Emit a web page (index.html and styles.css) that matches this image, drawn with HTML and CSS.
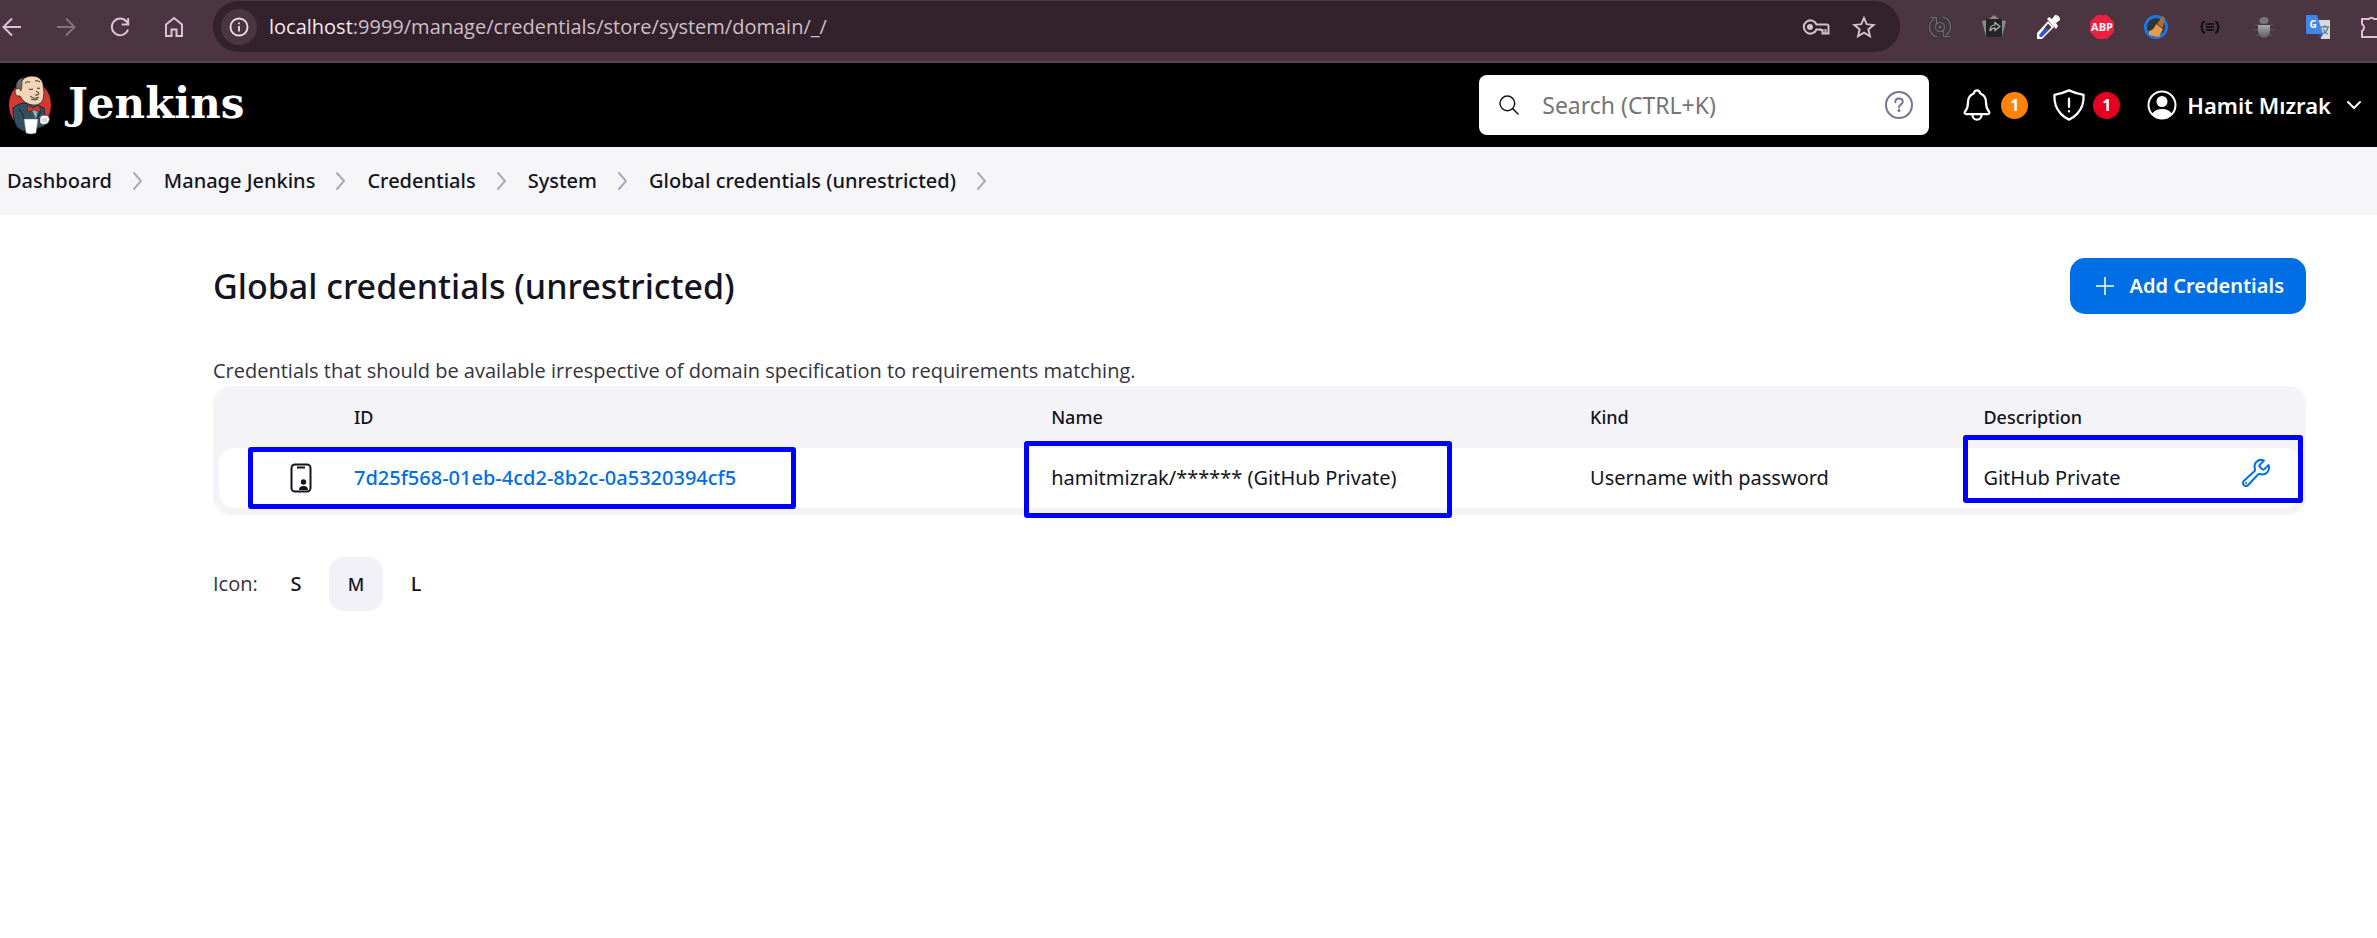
FILE: index.html
```
<!DOCTYPE html>
<html lang="en">
<head>
<meta charset="utf-8">
<title>Global credentials (unrestricted) [Jenkins]</title>
<link rel="stylesheet" href="styles.css">
</head>
<body>
<div class="toolbar">
  <div class="nav-buttons">
    <button class="tool" aria-label="Back"><svg viewBox="0 0 24 24"><path class="line" d="M21 12H4M12 3.500L3.500 12l8.500 8.500"/></svg></button>
    <button class="tool tool-off" aria-label="Forward"><svg viewBox="0 0 24 24"><path class="line" d="M3 12h17M12 3.500l8.500 8.500-8.500 8.500"/></svg></button>
    <button class="tool" aria-label="Reload"><svg viewBox="0 0 24 24"><path class="line" d="M20 14.500A8.300 8.300 0 1 1 18.500 6.500L20 8.500M20.200 3v6.500h-6.500"/></svg></button>
    <button class="tool" aria-label="Home"><svg viewBox="0 0 24 24"><path class="line" d="M4 9.500L12 3l8 6.500V21h-5.500v-6.500h-5V21H4z"/></svg></button>
  </div>
  <div class="omnibox">
    <button class="site-info" aria-label="Site information"><svg viewBox="0 0 24 24"><circle class="line" cx="12" cy="12" r="9.300"/><path class="line" d="M12 11v6M12 7v2"/></svg></button>
    <div class="url"><span class="host">localhost</span>:9999/manage/credentials/store/system/domain/_/</div>
    <button class="tool tool-box tool-key" aria-label="Passwords"><svg viewBox="0 0 28 24"><path class="line" d="M14.500 9.500H25a1.500 1.500 0 0 1 1.500 1.500v7.500h-6V15h-2v-0.500h-4A6.600 6.600 0 1 1 14.500 9.500z"/><circle cx="8" cy="12" r="3" fill="currentColor"/><path class="line" d="M23.500 14v4"/></svg></button>
    <button class="tool tool-box" aria-label="Bookmark"><svg viewBox="0 0 24 24"><path fill="currentColor" d="M24 9.200l-8.600-.8L12 .5 8.600 8.400 0 9.200l6.500 5.600L4.600 23.200 12 18.800l7.400 4.400-1.900-8.400zM12 16.500l-4.500 2.700 1.200-5.100-4-3.500 5.200-.5L12 5.300l2.100 4.800 5.200.5-4 3.500 1.200 5.100z"/></svg></button>
  </div>
  <div class="extensions">
    <button class="tool" aria-label="Sync extension"><svg viewBox="0 0 24 24"><g fill="none" stroke="#2c2c2c" stroke-width="3"><path d="M9 22A10 10 0 0 1 6 4M15 2a10 10 0 0 1 3 18"/><path d="M2 2.500h6.500V9M22 21.500h-6.500V15"/><circle cx="12" cy="12" r="4.500"/></g><g fill="none" stroke="#6c6c6c" stroke-width="1.500"><path d="M9 22A10 10 0 0 1 6 4M15 2a10 10 0 0 1 3 18"/><path d="M2 2.500h6.500V9M22 21.500h-6.500V15"/><circle cx="12" cy="12" r="4.500"/></g><circle cx="12" cy="12" r="1.500" fill="#666"/></svg></button>
    <button class="tool" aria-label="Share extension"><svg viewBox="0 0 24 24"><path fill="#8b8b8b" d="M0 6l5-1v17H4zM24 6l-5-1v17h1zM7 4l5-4 5 4v3H7z"/><rect x="4" y="4" width="16" height="18" rx="1" fill="#242424"/><path d="M8 16c0-6 3-6 5-6V7.500l5 4-5 4v-2.500c-2 0-3.500 0-5 3z" fill="none" stroke="#bbb" stroke-width="1.200"/></svg></button>
    <button class="tool" aria-label="Colour picker extension"><svg viewBox="0 0 24 24"><path fill="#fff" d="M12 6L1 18v6h5L18 12zM11 4l2-2 3 2 3-4q5 0 5 5l-4 3 2 3-2 3z"/><path fill="#2f55cf" d="M8 14h6l-8 8H4l-1-2z"/><path fill="#4a3541" d="M12 8.500l3.500 3.500L14 14H8z"/></svg></button>
    <button class="tool" aria-label="Adblock extension"><svg viewBox="0 0 24 24"><path fill="#ef1f43" d="M7 0h10l7 7v10l-7 7H7l-7-7V7z"/><text class="abp" x="12" y="16" text-anchor="middle">ABP</text></svg></button>
    <button class="tool" aria-label="Cleaner extension"><svg viewBox="0 0 24 24"><circle cx="12" cy="12" r="10.500" fill="#303437" stroke="#1c78e0" stroke-width="3"/><path fill="#b66a32" d="M17 3l2-2 1.500 1.500L19 13l-6-4z"/><path fill="#e8994a" d="M12 9l7 5-4 8-10-2v-4q5-1 7-7z"/></svg></button>
    <button class="tool" aria-label="Braces extension"><svg viewBox="0 0 24 24"><path fill="none" stroke="#0b090a" stroke-width="1.600" d="M7 6.500c-5 0-1 5.500-4.500 5.500C6 12 2 17.500 7 17.500M17 6.500c5 0 1 5.500 4.500 5.500C18 12 22 17.500 17 17.500M8 9h8M8 12h8M8 15h8"/></svg></button>
    <button class="tool" aria-label="Bug extension"><svg viewBox="0 0 24 24"><defs><linearGradient id="bug" x2="0" y2="1"><stop stop-color="#aaa"/><stop offset="1" stop-color="#5c5c5c"/></linearGradient></defs><path stroke="#625a5e" stroke-width="1" d="M3 9l5 2M21 9l-5 2M2 15h20M4 21l5-3M20 21l-5-3"/><ellipse cx="12" cy="5.500" rx="4.500" ry="3.500" fill="#777"/><path fill="url(#bug)" d="M6 10h12v6q-1 7-6 7t-6-7z"/></svg></button>
    <button class="tool" aria-label="Translate extension"><svg viewBox="0 0 24 24"><path fill="#d4dbdc" d="M10 5h14v19H15z"/><path fill="#4285ea" d="M0 0h11l6 19H1q-1 0-1-1z"/><path fill="#3046b5" d="M12 19h5l-3 5z"/><path fill="none" stroke="#63828b" stroke-width="1.300" d="M15 12h8M19 10v2M22 12q-1 5-6 7M17 14q2 4 5 5"/><text class="gt" x="7" y="13" text-anchor="middle">G</text></svg></button>
    <button class="tool" aria-label="Extensions"><svg viewBox="0 0 24 24"><path class="line" d="M2 4h7a3 3 0 0 1 5 0h6v18H2v-6a4 4 0 0 0 0-7z"/></svg></button>
  </div>
</div>

<header class="header">
  <a class="brand" href="#" aria-label="Jenkins home">
    <svg class="butler" viewBox="0 0 43 60">
      <ellipse cx="22" cy="30" rx="21" ry="24" fill="#d33833"/>
      <path fill="#335061" stroke="#1c2a33" d="M5 33q4-4 10-5l14 2 7 3 1 8-1 10-9 3-12 2-6-4q-4-7-4-19z"/>
      <path fill="#f0d6b7" stroke="#231f20" stroke-width=".8" d="M12 9Q15 1 24 1q9 0 11 8l1 9q0 7-3 10-4 3-9 2-9-2-12-9-5 1-5-5 1-4 5-3z"/>
      <path fill="#6d6b6d" stroke="#231f20" stroke-width=".6" d="M8 14Q7 5 16 2q-3 3-2 8l-1 6-2-3z"/>
      <path fill="none" stroke="#231f20" stroke-width=".9" d="M17 8q2-2 5-1M27 6q3-1 5 1M21 14q2 1 4 0M29 13q2 1 3 0M28 16l3 2q0 3-4 2M22 21q5 4 9 1M23 24q4 2 7 0"/>
      <path fill="#8fb0c4" d="M23 33l7 2-2 9z"/>
      <path fill="#e0312d" stroke="#231f20" stroke-width=".5" d="M19 30l6 3 6-3 2 7-7-2-6 2z"/>
      <path fill="none" stroke="#15222b" d="M11 34q4 4 5 10M33 36l-4 8"/>
      <path fill="#fff" stroke="#777" stroke-width=".5" d="M16 44h14l-2 14q-5 2-10 0z"/>
      <path fill="#fff" stroke="#555" stroke-width=".6" d="M32 43q1-4 8-2 3 3 0 7-4 3-8 0z"/>
      <path fill="none" stroke="#777" stroke-width=".6" d="M34 44h5M34 46h5"/>
    </svg>
    <span class="wordmark">Jenkins</span>
  </a>
  <div class="search">
    <label class="search-label" for="search" aria-label="Search"><svg viewBox="0 0 512 512"><g fill="none" stroke="currentColor" stroke-width="32" stroke-linecap="round"><path d="M221.090 64a157.090 157.090 0 10157.090 157.090A157.100 157.100 0 00221.090 64z"/><path d="M338 338l110 110"/></g></svg></label>
    <input class="search-input" id="search" type="text" placeholder="Search (CTRL+K)">
    <a class="help" href="#" aria-label="Help"><svg viewBox="0 0 28 28"><g fill="none" stroke="currentColor" stroke-width="2"><circle cx="14" cy="14" r="13"/><path d="M10.300 11.200q0-3.700 3.700-3.700t3.700 3.200q0 1.800-2 3-1.700 1-1.700 2.800" stroke-linecap="round"/></g><circle cx="14" cy="19.500" r="1.500" fill="currentColor"/></svg></a>
  </div>
  <button class="alert" aria-label="Notifications"><svg viewBox="0 0 512 512"><g class="ion"><path d="M427.680 351.430C402 320 383.870 304 383.870 217.350 383.870 138 343.350 109.730 310 96c-4.430-1.820-8.600-6-9.950-10.550C294.200 65.540 277.800 48 256 48s-38.210 17.550-44 37.470c-1.350 4.600-5.520 8.710-9.950 10.530-33.390 13.750-73.870 41.920-73.870 121.350C128.130 304 110 320 84.320 351.430 73.680 364.450 83 384 101.610 384h308.880c18.510 0 27.770-19.610 17.190-32.570zM320 384v16a64 64 0 01-128 0v-16"/></g></svg><span class="badge badge-orange">1</span></button>
  <button class="alert" aria-label="Security warnings"><svg viewBox="0 0 512 512"><g class="ion"><path d="M463.100 112.370C373.680 96.330 336.710 84.450 256 48c-80.710 36.450-117.680 48.330-207.100 64.370C32.700 369.130 240.580 457.790 256 464c15.420-6.210 223.300-94.870 207.100-351.630zM256 166v118M256 344v4"/></g></svg><span class="badge badge-red">1</span></button>
  <button class="user">
    <svg class="user-icon" viewBox="0 0 30 30"><circle cx="15" cy="15" r="13.500" fill="none" stroke="currentColor" stroke-width="2"/><circle cx="15" cy="11.500" r="5.500" fill="currentColor"/><path fill="currentColor" d="M5 24q3-5 10-5t10 5q-4 5-10 5T5 24z"/></svg>
    <span>Hamit Mızrak</span>
    <svg class="user-arrow" viewBox="0 0 16 16"><path fill="none" stroke="currentColor" stroke-width="2" stroke-linecap="round" d="M2 5l6 6 6-6"/></svg>
  </button>
</header>

<nav class="crumbs" aria-label="Breadcrumb">
  <a href="#">Dashboard</a><svg viewBox="0 0 10 18"><path d="M1 1l7 8-7 8"/></svg>
  <a href="#">Manage Jenkins</a><svg viewBox="0 0 10 18"><path d="M1 1l7 8-7 8"/></svg>
  <a href="#">Credentials</a><svg viewBox="0 0 10 18"><path d="M1 1l7 8-7 8"/></svg>
  <a href="#">System</a><svg viewBox="0 0 10 18"><path d="M1 1l7 8-7 8"/></svg>
  <a href="#">Global credentials (unrestricted)</a><svg viewBox="0 0 10 18"><path d="M1 1l7 8-7 8"/></svg>
</nav>

<main class="main">
  <div class="title-row">
    <h1>Global credentials (unrestricted)</h1>
    <a class="add" href="#"><svg viewBox="0 0 18 18"><path stroke="currentColor" stroke-width="1.500" d="M9 0v18M0 9h18"/></svg>Add Credentials</a>
  </div>
  <p class="intro">Credentials that should be available irrespective of domain specification to requirements matching.</p>
  <div class="table-card">
    <table class="table">
      <colgroup><col class="col-icon"><col class="col-id"><col class="col-name"><col class="col-kind"><col class="col-desc"><col></colgroup>
      <thead>
        <tr><th></th><th>ID</th><th>Name</th><th>Kind</th><th>Description</th><th></th></tr>
      </thead>
      <tbody>
        <tr>
          <td class="cell-icon"><svg viewBox="0 0 22 30"><rect x="1.500" y="1.500" width="19" height="27" rx="3.500" fill="none" stroke="currentColor" stroke-width="2"/><path stroke="currentColor" stroke-width="2" d="M7 4.500h8"/><circle cx="13.500" cy="19" r="2.700" fill="currentColor"/><path fill="currentColor" d="M9 27q0-4 4.500-4t4.500 4z"/></svg></td>
          <td><a class="id-link" href="#">7d25f568-01eb-4cd2-8b2c-0a5320394cf5</a><span class="mark mark-id"></span></td>
          <td>hamitmizrak/****** (GitHub Private)<span class="mark mark-name"></span></td>
          <td>Username with password</td>
          <td>GitHub Private<span class="mark mark-desc"></span></td>
          <td class="cell-action"><a href="#" aria-label="Update"><svg viewBox="0 0 512 512"><path fill="none" stroke="currentColor" stroke-width="32" stroke-linecap="round" d="M393.870 190a32.100 32.100 0 01-45.250 0l-26.570-26.570a32.090 32.090 0 010-45.260L382.190 58a1 1 0 00-.3-1.640c-38.820-16.640-89.150-8.160-121.110 23.570-30.580 30.350-32.320 76-21.120 115.840a31.930 31.930 0 01-9.060 32.080L64 380a48.170 48.170 0 1068 68l153.860-167a31.930 31.930 0 0131.600-9.130c39.540 10.590 84.540 8.600 114.720-21.190 32.490-32 39.500-88.560 23.750-120.930a1 1 0 00-1.600-.26z"/><circle cx="96" cy="416" r="16" fill="currentColor"/></svg></a></td>
        </tr>
      </tbody>
    </table>
  </div>
  <div class="sizes">
    <span class="sizes-label">Icon:</span>
    <a class="size" href="#">S</a>
    <span class="size size-on">M</span>
    <a class="size" href="#">L</a>
  </div>
</main>
</body>
</html>
```
FILE: styles.css
```
* { box-sizing: border-box; }

body {
  margin: 0;
  background: #fff;
  color: #14141f;
  font: 20px/30px "Noto Sans", "Open Sans", sans-serif;
}

a { color: inherit; text-decoration: none; }
button { border: 0; padding: 0; background: none; color: inherit; font: inherit; }
svg { display: block; flex: none; overflow: visible; }

.toolbar {
  display: flex;
  align-items: flex-start;
  height: 63px;
  padding-top: 1px;
  background: #4a3541;
  border-bottom: 2px solid #57444f;
  overflow: hidden;
}
.nav-buttons, .extensions { display: flex; gap: 30px; height: 51px; align-items: center; }
.nav-buttons { margin-right: 27px; }
.extensions { width: 449px; margin-left: 28px; overflow: hidden; }
.tool { flex: none; width: 24px; height: 24px; color: #dfbfd2; }
.tool-off { color: #85717c; }
.tool-box { color: #d2c2cb; }
.tool-key { width: 28px; }
.line { fill: none; stroke: currentColor; stroke-width: 2; }
.abp { font: bold 11px "Open Sans", sans-serif; fill: #fff; }
.gt { font: bold 10px "Open Sans", sans-serif; fill: #fff; }

.omnibox {
  flex: 1;
  display: flex;
  align-items: center;
  gap: 22px;
  height: 51px;
  padding: 0 24px 0 8px;
  border-radius: 26px;
  background: #33212b;
}
.site-info {
  display: grid;
  place-items: center;
  width: 36px;
  height: 36px;
  border-radius: 50%;
  background: #4a3541;
  color: #eadfe5;
}
.site-info svg { width: 22px; height: 22px; }
.url { flex: 1; margin-left: -10px; font-family: "Open Sans", sans-serif; color: #cdbfc7; }
.host { color: #f3eaef; }

.header {
  display: flex;
  align-items: center;
  height: 84px;
  padding: 0 15px 0 8px;
  background: #000;
  color: #fff;
}
.brand { display: flex; align-items: center; gap: 17px; margin-right: auto; }
.butler { width: 43px; height: 60px; }
.wordmark { padding-bottom: 3px; font: bold 42px/48px "DejaVu Serif", serif; }
.search {
  display: flex;
  align-items: center;
  width: 450px;
  height: 60px;
  margin-right: 30px;
  padding: 0 16px 0 18px;
  border-radius: 8px;
  background: #fff;
}
.search-label { color: #14141f; }
.search-label svg { width: 24px; height: 24px; }
.search-input {
  flex: 1;
  min-width: 0;
  padding: 0 0 0 21px;
  border: 0;
  outline: 0;
  background: none;
  font: 23px/30px "Noto Sans", sans-serif;
}
.search-input::placeholder { color: #757575; }
.help { color: #75758f; }
.help svg { width: 28px; height: 28px; }
.alert { display: flex; align-items: center; gap: 6px; margin-right: 23px; }
.alert svg { width: 36px; height: 36px; }
.ion { fill: none; stroke: currentColor; stroke-width: 32; stroke-linecap: round; stroke-linejoin: round; }
.badge {
  width: 27px;
  height: 27px;
  border-radius: 50%;
  font: bold 16px/27px "Noto Sans", sans-serif;
}
.badge-orange { background: #ff820a; }
.badge-red { background: #e6001f; }
.user { display: flex; align-items: center; gap: 10px; margin-left: 4px; font-size: 22px; font-weight: 600; }
.user-icon { width: 30px; height: 30px; }
.user-arrow { width: 16px; height: 16px; margin-left: 5px; }

.crumbs {
  display: flex;
  align-items: center;
  gap: 21px;
  height: 68px;
  padding-left: 7px;
  background: #f6f6f9;
  font-weight: 500;
}
.crumbs svg { width: 10px; height: 18px; fill: none; stroke: #a9a9bd; stroke-width: 2; stroke-linecap: round; }

.main { padding: 42px 71px 0 213px; }
.title-row { display: flex; align-items: center; justify-content: space-between; height: 58px; }
h1 { margin: 0; font-size: 34px; font-weight: 500; line-height: 48px; }
.add {
  display: flex;
  align-items: center;
  gap: 16px;
  height: 56px;
  padding: 0 22px 0 26px;
  border-radius: 15px;
  background: #006fe6;
  color: #fff;
  font-weight: 600;
}
.add svg { width: 18px; height: 18px; }
.intro { margin: 41px 0 0; font-family: "Open Sans", sans-serif; color: #333340; }

.table-card { padding: 0 6px 7px; border-radius: 18px; background: #f3f3f8; }
.table { width: 100%; table-layout: fixed; border-spacing: 0; font-weight: 450; }
.col-icon { width: 119px; }
.col-id { width: 33.5%; }
.col-name { width: 25.9%; }
.col-kind { width: 18.9%; }
.col-desc { width: 12.5%; }
th { height: 62px; padding: 0 16px; text-align: left; font-size: 18px; font-weight: 500; }
td { position: relative; height: 60px; padding: 0 16px; background: #fff; white-space: nowrap; }
td:first-child { border-radius: 15px 0 0 15px; }
td:last-child { border-radius: 0 15px 15px 0; }
.cell-icon { padding-left: 71px; }
.cell-icon svg { width: 22px; height: 30px; }
.id-link { color: #006fe6; font-weight: 500; }
.cell-action { color: #006fe6; padding: 0 0 10px 12px; }
.cell-action svg { width: 32px; height: 32px; }

/* highlight frames over the row */
.mark { position: absolute; z-index: 1; border: 5px solid #00f; border-radius: 3px; pointer-events: none; }
.mark-id { top: -1px; left: -90px; width: 548px; height: 62px; }
.mark-name { top: -7px; left: -11px; width: 428px; height: 77px; }
.mark-desc { top: -13px; left: -4px; width: 340px; height: 68px; }

.sizes { display: flex; align-items: center; margin-top: 42px; }
.sizes-label { width: 56px; font-family: "Open Sans", sans-serif; color: #333340; }
.size { width: 54px; height: 54px; margin-right: 6px; border-radius: 15px; line-height: 54px; text-align: center; font-weight: 500; }
.size-on { background: #f2f1f7; font-size: 18px; }
```
